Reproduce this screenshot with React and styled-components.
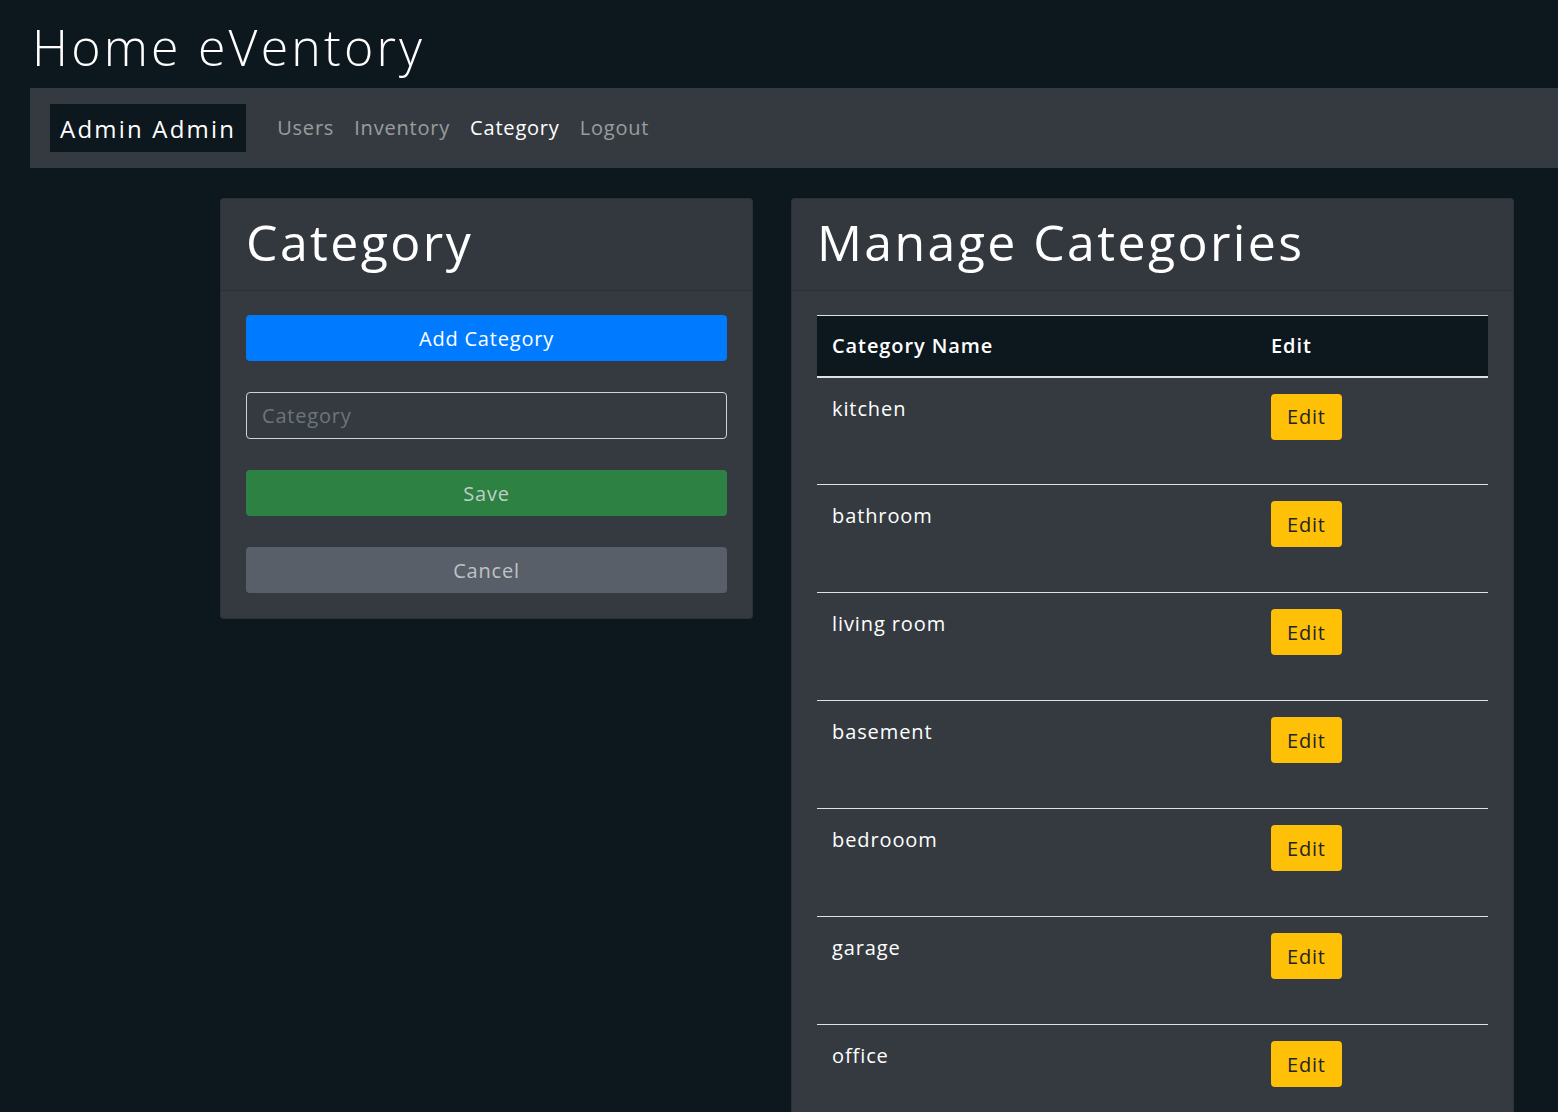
import React from "react";
import styled, { createGlobalStyle } from "styled-components";

const categories = [
  "kitchen",
  "bathroom",
  "living room",
  "basement",
  "bedrooom",
  "garage",
  "office",
];

const GlobalStyle = createGlobalStyle`
  body {
    margin: 0;
    background: #0d171e;
    color: #fff;
    font-family: "Open Sans", "Liberation Sans", sans-serif;
  }
`;

const Page = styled.div`
  padding: 0 0 0 30px;
  min-height: 1112px;
`;

const Title = styled.h1`
  margin: 0;
  padding: 17px 0 0 2px;
  height: 88px;
  box-sizing: border-box;
  font-size: 50px;
  font-weight: 300;
  letter-spacing: 3.2px;
  line-height: 1.2;
`;

const Nav = styled.nav`
  display: flex;
  align-items: center;
  gap: 20px;
  height: 80px;
  padding: 0 20px;
  background: #343a40;
`;

const Brand = styled.div`
  background: #0d171e;
  padding: 0 10px;
  height: 48px;
  display: flex;
  align-items: center;
  font-size: 24px;
  letter-spacing: 2.2px;
  margin-right: 11px;
`;

const NavLink = styled.a`
  font-size: 20px;
  letter-spacing: 0.8px;
  padding-bottom: 2px;
  color: ${(p) => (p.$active ? "#fff" : "rgba(255,255,255,0.5)")};
  text-decoration: none;
`;

const Content = styled.div`
  display: flex;
  align-items: flex-start;
  gap: 38px;
  padding: 30px 0 0 190px;
`;

const Card = styled.section`
  width: ${(p) => p.$width}px;
  box-sizing: border-box;
  background: #343a40;
  border-radius: 4px;
  border: 1px solid rgba(0, 0, 0, 0.125);
`;

const CardHeader = styled.div`
  height: 92px;
  box-sizing: border-box;
  padding: 13px 25px 0;
  border-bottom: 1px solid rgba(0, 0, 0, 0.125);
  background: rgba(0, 0, 0, 0.03);
  h2 {
    margin: 0;
    font-size: 50px;
    font-weight: 400;
    letter-spacing: 2.4px;
    line-height: 1.2;
  }
`;

const CardBody = styled.div`
  padding: 24px 25px 25px;
  display: flex;
  flex-direction: column;
  gap: 31px;
`;

const Button = styled.button`
  height: 46px;
  border: none;
  border-radius: 4px;
  font-family: inherit;
  font-size: 20px;
  letter-spacing: 0.8px;
  background: ${(p) => p.$bg};
  color: ${(p) => p.$color};
  width: ${(p) => (p.$inline ? "auto" : "100%")};
  padding: 0 16px;
`;

const Input = styled.input`
  height: 47px;
  box-sizing: border-box;
  background: transparent;
  border: 1px solid #ced4da;
  border-radius: 4px;
  padding: 0 15px;
  font-family: inherit;
  font-size: 20px;
  letter-spacing: 0.8px;
  color: #fff;
  &::placeholder {
    color: #6c757d;
  }
`;

const Table = styled.table`
  width: 100%;
  border-collapse: collapse;
  font-size: 20px;
  letter-spacing: 0.9px;
  th {
    background: #0d171e;
    text-align: left;
    font-weight: 600;
    height: 61px;
    box-sizing: border-box;
    padding: 0 15px;
    border-top: 1px solid #dee2e6;
    border-bottom: 2px solid #dee2e6;
  }
  th.name {
    width: 439px;
  }
  td {
    vertical-align: top;
    padding: 16px 15px 0;
    height: 108px;
    box-sizing: border-box;
    border-top: 1px solid #dee2e6;
  }
  tbody tr:first-child td {
    border-top: none;
  }
  td.name {
    padding-top: 17px;
  }
`;

export default function App() {
  return (
    <Page>
      <GlobalStyle />
      <Title>Home eVentory</Title>
      <Nav>
        <Brand>Admin Admin</Brand>
        <NavLink>Users</NavLink>
        <NavLink>Inventory</NavLink>
        <NavLink $active>Category</NavLink>
        <NavLink>Logout</NavLink>
      </Nav>
      <Content>
        <Card $width={533}>
          <CardHeader>
            <h2>Category</h2>
          </CardHeader>
          <CardBody>
            <Button $bg="#007bff" $color="#fff">Add Category</Button>
            <Input placeholder="Category" />
            <Button $bg="#2c8143" $color="#c0cfc4">Save</Button>
            <Button $bg="#585f68" $color="#c0c2c4">Cancel</Button>
          </CardBody>
        </Card>
        <Card $width={723}>
          <CardHeader>
            <h2>Manage Categories</h2>
          </CardHeader>
          <CardBody>
            <Table>
              <thead>
                <tr>
                  <th className="name">Category Name</th>
                  <th>Edit</th>
                </tr>
              </thead>
              <tbody>
                {categories.map((c) => (
                  <tr key={c}>
                    <td className="name">{c}</td>
                    <td>
                      <Button $inline $bg="#ffc107" $color="#212529">Edit</Button>
                    </td>
                  </tr>
                ))}
              </tbody>
            </Table>
          </CardBody>
        </Card>
      </Content>
    </Page>
  );
}
